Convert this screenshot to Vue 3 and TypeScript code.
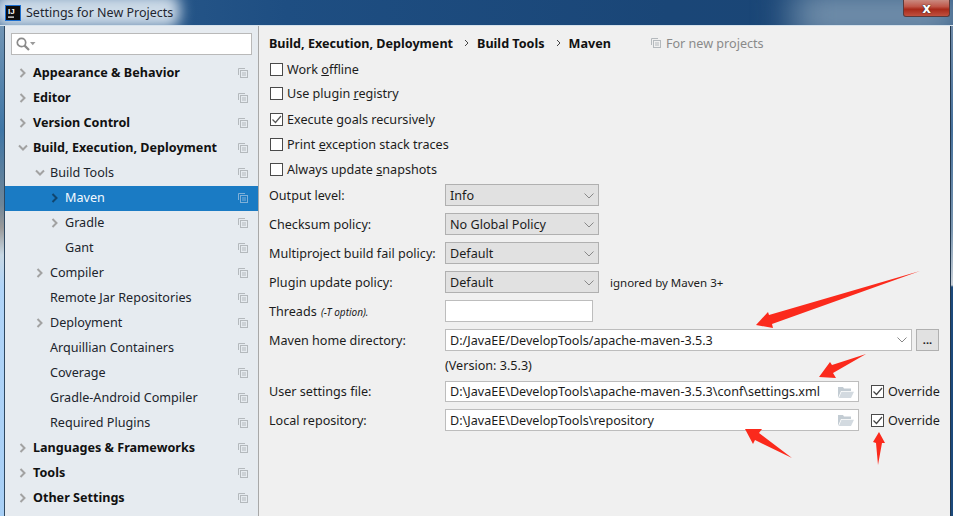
<script setup lang="ts">
interface Item { label: string; level: number; bold?: boolean; arrow?: 'right' | 'down'; selected?: boolean }
const items: Item[] = [
  { label: 'Appearance & Behavior', level: 0, bold: true, arrow: 'right' },
  { label: 'Editor', level: 0, bold: true, arrow: 'right' },
  { label: 'Version Control', level: 0, bold: true, arrow: 'right' },
  { label: 'Build, Execution, Deployment', level: 0, bold: true, arrow: 'down' },
  { label: 'Build Tools', level: 1, arrow: 'down' },
  { label: 'Maven', level: 2, arrow: 'right', selected: true },
  { label: 'Gradle', level: 2, arrow: 'right' },
  { label: 'Gant', level: 2 },
  { label: 'Compiler', level: 1, arrow: 'right' },
  { label: 'Remote Jar Repositories', level: 1 },
  { label: 'Deployment', level: 1, arrow: 'right' },
  { label: 'Arquillian Containers', level: 1 },
  { label: 'Coverage', level: 1 },
  { label: 'Gradle-Android Compiler', level: 1 },
  { label: 'Required Plugins', level: 1 },
  { label: 'Languages & Frameworks', level: 0, bold: true, arrow: 'right' },
  { label: 'Tools', level: 0, bold: true, arrow: 'right' },
  { label: 'Other Settings', level: 0, bold: true, arrow: 'right' },
]
interface Check { pre: string; key: string; post: string; checked?: boolean; cls: string }
const checks: Check[] = [
  { pre: 'Work ', key: 'o', post: 'ffline', cls: 'c1' },
  { pre: 'Use plugin ', key: 'r', post: 'egistry', cls: 'c2' },
  { pre: 'Execute ', key: 'g', post: 'oals recursively', checked: true, cls: 'c3' },
  { pre: 'Print ', key: 'e', post: 'xception stack traces', cls: 'c4' },
  { pre: 'Always update ', key: 's', post: 'napshots', cls: 'c5' },
]
const selects = [
  { label: 'Output level:', value: 'Info' },
  { label: 'Checksum policy:', value: 'No Global Policy' },
  { label: 'Multiproject build fail policy:', value: 'Default' },
  { label: 'Plugin update policy:', value: 'Default', note: 'ignored by Maven 3+' },
]
</script>

<template>
  <div class="screen">
    <header class="titlebar">
      <div class="glow"></div>
      <div class="glow-right"></div>
      <svg class="appicon" width="16" height="16" viewBox="0 0 16 16">
        <rect x="0.5" y="0.5" width="15" height="15" fill="#0d0d0d" stroke="#1b6fd0" />
        <rect x="3" y="11.5" width="6" height="1.2" fill="#fff" />
        <text x="3" y="9" class="ij">IJ</text>
      </svg>
      <span class="title">Settings for New Projects</span>
      <div class="close"><span>x</span></div>
    </header>

    <div class="window">
      <aside class="sidebar">
        <div class="search">
          <svg width="20" height="15" viewBox="0 0 20 15">
            <circle cx="5.5" cy="5.5" r="4.2" fill="none" stroke="#8a8a8a" stroke-width="1.7" />
            <path d="M8.6 8.6 L13 13" stroke="#8a8a8a" stroke-width="2.2" />
            <path d="M14 5h5.5l-2.75 3.2z" fill="#9a9a9a" />
          </svg>
        </div>
        <ul class="tree">
          <li
            v-for="item in items"
            :key="item.label"
            class="row"
            :class="['lvl' + item.level, { bold: item.bold, selected: item.selected }]"
          >
            <span class="chev">
              <svg v-if="item.arrow === 'right'" width="8" height="10" viewBox="0 0 8 10">
                <path d="M1.5 1 L5.5 5 L1.5 9" fill="none" stroke-width="2" />
              </svg>
              <svg v-else-if="item.arrow === 'down'" width="10" height="8" viewBox="0 0 10 8">
                <path d="M1 1.5 L5 5.5 L9 1.5" fill="none" stroke-width="2" />
              </svg>
            </span>
            <span class="label">{{ item.label }}</span>
            <svg class="copy" width="10" height="10" viewBox="0 0 10 10">
              <path d="M0.5 7V0.5H7" fill="none" />
              <rect x="2.5" y="2.5" width="7" height="7" fill="none" />
              <path d="M4 5H8M4 7H8" />
            </svg>
          </li>
        </ul>
      </aside>

      <main class="content">
        <div class="crumbs">
          <b>Build, Execution, Deployment</b>
          <svg class="sep" width="5" height="8" viewBox="0 0 5 8"><path d="M1 1l3 3-3 3" fill="none" stroke="#444" /></svg>
          <b>Build Tools</b>
          <svg class="sep" width="5" height="8" viewBox="0 0 5 8"><path d="M1 1l3 3-3 3" fill="none" stroke="#444" /></svg>
          <b>Maven</b>
          <span class="newproj">
            <svg class="copy" width="10" height="10" viewBox="0 0 10 10">
              <path d="M0.5 7V0.5H7" fill="none" />
              <rect x="2.5" y="2.5" width="7" height="7" fill="none" />
              <path d="M4 5H8M4 7H8" />
            </svg>
            For new projects
          </span>
        </div>

        <div class="checks">
          <label v-for="c in checks" :key="c.pre" class="check" :class="c.cls">
            <span class="box">
              <svg v-if="c.checked" width="11" height="11" viewBox="0 0 11 11"><path d="M1.5 5.5 L4.5 8.5 L10 2" fill="none" stroke="#555" stroke-width="1.2" /></svg>
            </span>
            <span>{{ c.pre }}<u>{{ c.key }}</u>{{ c.post }}</span>
          </label>
        </div>

        <div class="form">
          <div v-for="s in selects" :key="s.label" class="frow">
            <span class="flabel">{{ s.label }}</span>
            <div class="select">
              <span>{{ s.value }}</span>
              <svg width="10" height="6" viewBox="0 0 10 6"><path d="M0.5 0.5 L5 5 L9.5 0.5" fill="none" stroke="#888" /></svg>
            </div>
            <span v-if="s.note" class="note">{{ s.note }}</span>
          </div>
          <div class="frow">
            <span class="flabel">Threads <i class="hint">(-T option).</i></span>
            <div class="input threads"></div>
          </div>
          <div class="frow">
            <span class="flabel">Maven home directory:</span>
            <div class="input home">
              <span>D:/JavaEE/DevelopTools/apache-maven-3.5.3</span>
              <svg width="10" height="6" viewBox="0 0 10 6"><path d="M0.5 0.5 L5 5 L9.5 0.5" fill="none" stroke="#888" /></svg>
            </div>
            <div class="dots">...</div>
          </div>
          <div class="version">(Version: 3.5.3)</div>
          <div class="frow short">
            <span class="flabel">User settings file:</span>
            <div class="input path">
              <span>D:\JavaEE\DevelopTools\apache-maven-3.5.3\conf\settings.xml</span>
              <svg class="folder" width="16" height="12" viewBox="0 0 16 12"><path d="M0 1h5l1 1.5h7V5H3L0 12z" fill="#c3ccd3" /><path d="M3.5 5.8H16L13 12H0.8z" fill="#d3dae0" /></svg>
            </div>
            <label class="check over">
              <span class="box"><svg width="11" height="11" viewBox="0 0 11 11"><path d="M1.5 5.5 L4.5 8.5 L10 2" fill="none" stroke="#444" stroke-width="1.2" /></svg></span>
              <span>Override</span>
            </label>
          </div>
          <div class="frow">
            <span class="flabel">Local repository:</span>
            <div class="input path">
              <span>D:\JavaEE\DevelopTools\repository</span>
              <svg class="folder" width="16" height="12" viewBox="0 0 16 12"><path d="M0 1h5l1 1.5h7V5H3L0 12z" fill="#c3ccd3" /><path d="M3.5 5.8H16L13 12H0.8z" fill="#d3dae0" /></svg>
            </div>
            <label class="check over">
              <span class="box"><svg width="11" height="11" viewBox="0 0 11 11"><path d="M1.5 5.5 L4.5 8.5 L10 2" fill="none" stroke="#444" stroke-width="1.2" /></svg></span>
              <span>Override</span>
            </label>
          </div>
        </div>
      </main>
    </div>

    <svg class="annot" width="953" height="516" viewBox="0 0 953 516">
      <g fill="#fb2a1c">
        <polygon points="920,271 769,315 768,312 756,325 773,328 772,324" />
        <polygon points="866,354 832,365 830,362 819,377 836,378 833,373" />
        <polygon points="792,458 759,433 762,429 745,429 753,444 755,440" />
        <polygon points="878,465 876,443 873,442 879,432 885,443 882,443" />
      </g>
    </svg>
  </div>
</template>

<style>
html, body { margin: 0; padding: 0; background: #1c4a7c; }
</style>

<style scoped>
.screen {
  position: relative;
  width: 953px;
  height: 516px;
  overflow: hidden;
  display: flex;
  flex-direction: column;
  font-family: "Noto Sans", "Open Sans", sans-serif;
  font-size: 12.6px;
  color: #1c1c1c;
  background:
    linear-gradient(180deg, #7d9cb8 0, #3f76a6 130px, #6f8698 205px, #9a9a9a 228px, #c8d8e4 255px, #b0d4f8 287px, #a8cff5 516px) left top / 5px 100% no-repeat,
    linear-gradient(180deg, #7890aa 0, #46719c 130px, #7a96b0 230px, #c8d0d8 285px, #1c4a7c 287px, #1c4a7c 516px) right top / 5px 100% no-repeat;
}
.titlebar {
  position: relative;
  height: 26px;
  flex: none;
  display: flex;
  align-items: center;
  background: linear-gradient(90deg, #2f5f90 0, #1e4e82 30%, #1a4677 70%, #1b4675 100%);
  overflow: hidden;
  box-sizing: border-box;
  border-bottom: 1px solid #d6e2ec;
}
.glow {
  position: absolute;
  left: -6px;
  top: -6px;
  width: 186px;
  height: 34px;
  background: #cddbe8;
  filter: blur(7px);
  border-radius: 12px;
}
.glow-right {
  position: absolute;
  right: -10px;
  top: -10px;
  width: 170px;
  height: 50px;
  background: #7a96b0;
  filter: blur(18px);
}
.appicon { position: relative; margin-left: 5px; }
.ij { font: bold 8px "Liberation Sans", sans-serif; fill: #fff; }
.title { position: relative; margin-left: 5px; color: #1f2630; font-size: 12.5px; }
.close {
  position: absolute;
  left: 903px;
  top: 0;
  width: 47px;
  height: 17px;
  box-sizing: border-box;
  border: 1px solid #5c3a3a;
  border-top: 0;
  border-radius: 0 0 3px 3px;
  background: linear-gradient(180deg, #c98a80 0, #c0584a 40%, #a82a1a 58%, #c0503e 100%);
  display: flex;
  align-items: center;
  justify-content: center;
}
.close span {
  color: #fff;
  font: 700 13.5px/15px "DejaVu Sans", sans-serif;
  text-shadow: 0 0 1px #222, 0 0 1px #222;
}
.window {
  flex: 1;
  min-height: 0;
  margin: 0 2px 0 4px;
  display: flex;
  border-left: 1px solid #2f4860;
  border-right: 1px solid #24384e;
}
.sidebar {
  width: 253px;
  flex: none;
  background: #e6ebf0;
  border-right: 1px solid #a8a8a8;
  padding-top: 7px;
}
.search {
  margin: 0 6px 6px 6px;
  height: 22px;
  box-sizing: border-box;
  border: 1px solid #b9b9b9;
  background: #fff;
  display: flex;
  align-items: center;
  padding: 1px 0 0 4px;
}
.tree { list-style: none; margin: 0; padding: 0; }
.row {
  height: 25px;
  box-sizing: border-box;
  padding-bottom: 2px;
  display: flex;
  align-items: center;
  color: #20242c;
}
.row.bold { font-weight: 700; color: #111; }
.chev {
  width: 16px;
  box-sizing: border-box;
  padding-right: 5px;
  flex: none;
  display: flex;
  justify-content: center;
  align-items: center;
}
.chev svg path { stroke: #a2a2a2; }
.lvl0 { padding-left: 12px; }
.lvl1 { padding-left: 29px; }
.lvl2 { padding-left: 44px; }
.label { flex: 1; }
.row .copy { margin-right: 10px; }
.copy { flex: none; stroke: #b4b9bd; }
.selected { background: #1a7bc4; color: #f4faff; }
.selected .chev svg path { stroke: #10466f; }
.selected .copy { stroke: #7fb0d8; }
.content {
  flex: 1;
  min-width: 0;
  background: #f0f0f0;
  padding-left: 10px;
}
.crumbs {
  height: 34px;
  display: flex;
  align-items: center;
  color: #111;
}
.sep { margin: 0 8px 0 11px; }
.newproj {
  display: inline-flex;
  align-items: center;
  gap: 5px;
  margin-left: 40px;
  color: #8a8a8a;
}
.checks { display: flex; flex-direction: column; }
.check { display: flex; align-items: center; gap: 4px; height: 13px; line-height: 13px; }
.c1 { margin-top: 3px; }
.c2 { margin-top: 11px; }
.c3 { margin-top: 13px; }
.c4 { margin-top: 12px; }
.c5 { margin-top: 12px; }
.box {
  width: 13px;
  height: 13px;
  box-sizing: border-box;
  border: 1px solid #4a4a4a;
  background: #fff;
  margin-left: 1px;
  flex: none;
  display: flex;
  align-items: center;
  justify-content: center;
}
.form { margin-top: 8px; display: flex; flex-direction: column; gap: 7px; }
.frow { display: flex; align-items: center; height: 22px; }
.frow.short { height: 21px; }
.flabel { width: 176px; flex: none; }
.hint { font-size: 10px; margin-left: 1px; }
.select {
  width: 154px;
  height: 22px;
  box-sizing: border-box;
  border: 1px solid #b0b0b0;
  background: #e1e1e1;
  display: flex;
  align-items: center;
  justify-content: space-between;
  padding: 1px 4px 0 4px;
}
.note { margin-left: 11px; font-size: 11.5px; }
.input {
  height: 100%;
  box-sizing: border-box;
  border: 1px solid #bdbdbd;
  background: #fff;
  display: flex;
  align-items: center;
  justify-content: space-between;
  padding: 0 4px;
}
.threads { width: 148px; }
.home { width: 467px; }
.path { width: 414px; }
.folder { margin-right: 0; }
.dots {
  width: 23px;
  height: 22px;
  box-sizing: border-box;
  margin-left: 4px;
  border: 1px solid #b0b0b0;
  background: #e1e1e1;
  text-align: center;
  line-height: 20px;
  font-weight: 700;
  font-size: 11px;
}
.version { margin: 0 0 -7px 176px; height: 23px; line-height: 16px; }
.over { margin-left: 11px; }
.annot { position: absolute; left: 0; top: 0; pointer-events: none; }
</style>
